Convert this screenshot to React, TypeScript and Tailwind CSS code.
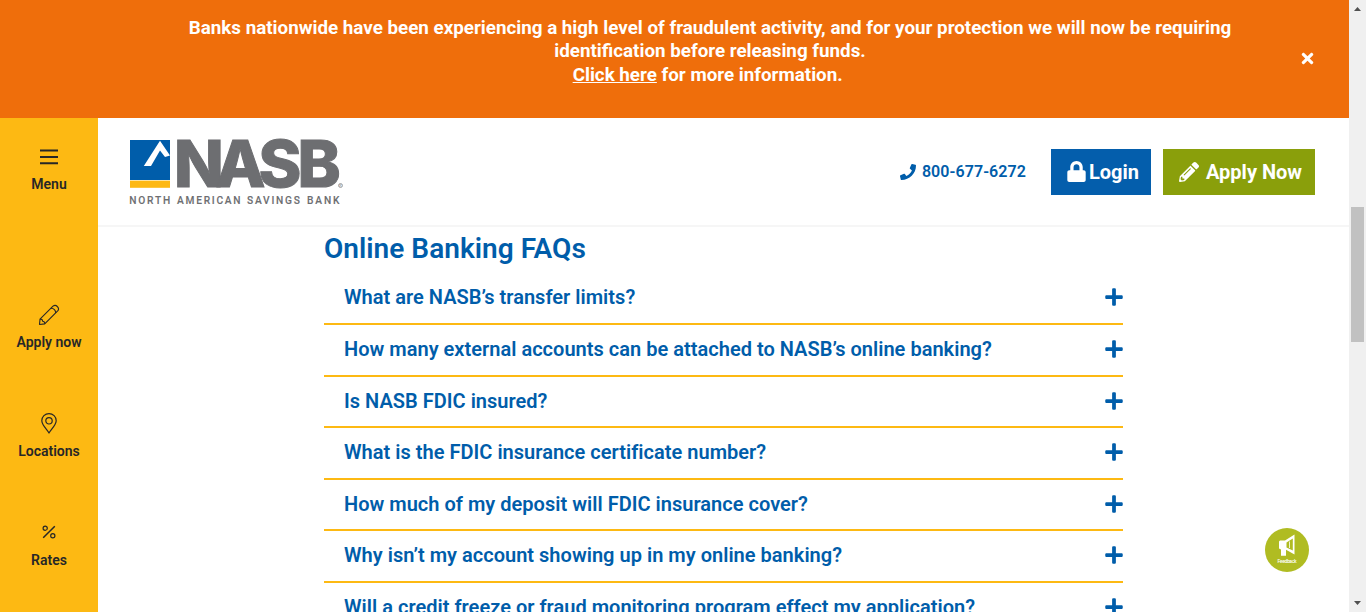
import React from "react";
import { FaLock, FaPencilAlt, FaPhone, FaPlus, FaTimes } from "react-icons/fa";

const questions = [
  "What are NASB’s transfer limits?",
  "How many external accounts can be attached to NASB’s online banking?",
  "Is NASB FDIC insured?",
  "What is the FDIC insurance certificate number?",
  "How much of my deposit will FDIC insurance cover?",
  "Why isn’t my account showing up in my online banking?",
  "Will a credit freeze or fraud monitoring program effect my application?",
];

function Logo() {
  return (
    <svg width="216" height="70" viewBox="0 0 216 70" className="mt-px block shrink-0" role="img" aria-label="NASB North American Savings Bank">
      <rect x="1" y="3" width="40" height="40" fill="#005daa" />
      <rect x="1" y="43.6" width="40" height="7.2" fill="#fdb813" />
      <path d="M14.8 29 31 3.7 41 18.5 36 20 31 13.500 22 29Z" fill="#fff" />
      <g fill="#6d6e71" stroke="#6d6e71" fontFamily="Inter, 'Liberation Sans', sans-serif">
        <text y="50.3" x="45 86.5 129.5 168.5" fontSize="65" fontWeight="800" strokeWidth="1">NASB</text>
        <g fontSize="10.2" fontWeight="500" strokeWidth="0.1" fontFamily="Roboto, sans-serif">
          <text x="0.2" y="67" textLength="41">NORTH</text>
          <text x="48" y="67" textLength="63.500">AMERICAN</text>
          <text x="118" y="67" textLength="53">SAVINGS</text>
          <text x="178" y="67" textLength="32.500">BANK</text>
        </g>
        <circle cx="211.5" cy="48.5" r="2" fill="none" strokeWidth="0.6" />
        <text x="210.3" y="49.8" fontSize="3.5" strokeWidth="0">R</text>
      </g>
    </svg>
  );
}

function MenuIcon() {
  return (
    <svg width="18" height="16" viewBox="0 0 18 16" fill="#272727" className="mt-px">
      <path d="M0 0.5H18V2.5H0ZM0 7H18V9H0ZM0 13.2H18V15.2H0Z" />
    </svg>
  );
}

function PencilIcon() {
  return (
    <svg width="22" height="22" viewBox="0 0 22 22" fill="none" stroke="#272727" strokeWidth="1.1" strokeLinejoin="round" className="mt-px">
      <path d="M1.5 20.5 2 15.2 15 2.2Q17.2 .3 19.3 2.5 21.6 4.7 19.7 6.9L6.7 19.9Z" />
      <path d="M2 15.2Q4.3 14.8 4.7 17.3 7 17.5 6.7 19.9M13 4.2Q17.5 4.5 17.7 8.9" />
    </svg>
  );
}

function PinIcon() {
  return (
    <svg width="16" height="21" viewBox="0 0 16 21" fill="none" stroke="#272727" strokeWidth="1.2" className="mb-px">
      <path d="M8 20C6.5 17 .8 12 .8 7.7A7.2 7.1 0 0 1 15.2 7.7C15.2 12 9.5 17 8 20Z" strokeLinejoin="round" />
      <circle cx="8" cy="7.8" r="3.2" />
    </svg>
  );
}

function PercentIcon() {
  return (
    <svg width="14" height="14" viewBox="0 0 14 14" fill="none" stroke="#272727" strokeWidth="1.2" className="mb-px">
      <circle cx="3.2" cy="3.2" r="2.1" />
      <circle cx="10.8" cy="10.8" r="2.1" />
      <path d="M12.8 1.2 1.2 12.8" strokeWidth="1.5" />
    </svg>
  );
}

function SideItem({ icon, label, className }: { icon: React.ReactNode; label: string; className: string }) {
  return (
    <a className={"flex flex-col items-center " + className}>
      <span className="flex h-[23px] items-center">{icon}</span>
      <span className="mt-1.5 text-sm leading-5 font-semibold text-[#272727]">{label}</span>
    </a>
  );
}

function Feedback() {
  return (
    <button className="absolute right-[40px] bottom-[40px] size-11" aria-label="Feedback">
      <svg width="44" height="44" viewBox="0 0 44 44" className="block">
        <circle cx="22" cy="22" r="22" fill="#b0bc22" />
        <path d="M15 12.5H20L29.5 6.500V26.500L21 21.800V27.800H16V21.500L14 20.500V13.500Z" fill="#fff" />
        <path d="M21.5 14.5 27.8 10.500V22.500L21.5 19.500Z" fill="#b0bc22" />
        <path d="M24.500 13.500V20" stroke="#fff" strokeWidth="0.800" />
        <text x="22" y="34.6" textAnchor="middle" fontSize="5" fontWeight="500" fill="#fff" fontFamily="Roboto, sans-serif" textLength="19">Feedback</text>
      </svg>
    </button>
  );
}

function Scrollbar() {
  return (
    <div className="flex w-[17px] shrink-0 flex-col items-center justify-between bg-[#f0f0f0]">
      <svg width="17" height="17" viewBox="0 0 17 17"><path d="M5 11 8.500 7 12 11Z" fill="#505050" /></svg>
      <div className="mt-[190px] h-[135px] w-[13px] bg-[#c1c1c1]" />
      <svg width="17" height="17" viewBox="0 0 17 17" className="mt-auto"><path d="M5 6 8.500 10 12 6Z" fill="#505050" /></svg>
    </div>
  );
}

export default function App() {
  return (
    <div className="flex h-[612px] w-[1366px] overflow-hidden bg-white font-['Roboto',sans-serif]">
      <div className="relative flex min-w-0 flex-1 flex-col">
        <div className="flex h-[118px] shrink-0 items-center bg-[#ef6e0b] text-white">
          <p className="ml-[150px] h-[84px] w-[1120px] text-center text-[18.8px] leading-[23.4px] font-bold">
            Banks nationwide have been experiencing a high level of fraudulent activity, and for your protection we will now be requiring<br />
            identification before releasing funds.<br />
            <a className="underline">Click here</a> for more information.&nbsp;
          </p>
          <button className="mb-px ml-[29px] flex w-[17px] justify-center" aria-label="Close"><FaTimes size={17} /></button>
        </div>
        <div className="flex min-h-0 flex-1">
          <nav className="flex w-[98px] shrink-0 flex-col bg-[#fdb913]">
            <SideItem className="mt-[27px]" icon={<MenuIcon />} label="Menu" />
            <SideItem className="mt-[109px]" icon={<PencilIcon />} label="Apply now" />
            <SideItem className="mt-[60px]" icon={<PinIcon />} label="Locations" />
            <SideItem className="mt-[60px]" icon={<PercentIcon />} label="Rates" />
          </nav>
          <main className="min-w-0 flex-1">
            <header className="flex h-[109px] items-center border-b-2 border-[#f6f6f6] pl-[31px] pr-[34px]">
              <Logo />
              <a className="ml-auto flex items-center gap-1.5 text-base font-semibold tracking-[0.08px] text-[#005daa]">
                <FaPhone size={16} />800-677-6272
              </a>
              <a className="ml-[25px] flex h-[46px] w-[100px] items-center justify-center gap-[2px] bg-[#045eac] pl-[3px] text-xl font-bold text-white">
                <FaLock size={21} />Login
              </a>
              <a className="ml-3 flex h-[46px] w-[152px] items-center justify-center gap-[7px] bg-[#8a9f0b] pl-[3px] text-xl font-bold text-white">
                <FaPencilAlt size={20} />Apply Now
              </a>
            </header>
            <section className="ml-[226px] w-[799px] text-[#005daa]">
              <h2 className="pt-1 text-[28px] leading-9 font-semibold tracking-[0.03px]">Online Banking FAQs</h2>
              <ul className="mt-[6.4px]">
                {questions.map((q) => (
                  <li key={q} className="flex h-[51.6px] items-center justify-between border-b-2 border-[#fdb913] pb-[1.6px] pl-5">
                    <span className="text-xl leading-6 font-semibold tracking-[0.02px]">{q}</span>
                    <FaPlus size={20} className="-mr-px" />
                  </li>
                ))}
              </ul>
            </section>
          </main>
        </div>
        <Feedback />
      </div>
      <Scrollbar />
    </div>
  );
}
